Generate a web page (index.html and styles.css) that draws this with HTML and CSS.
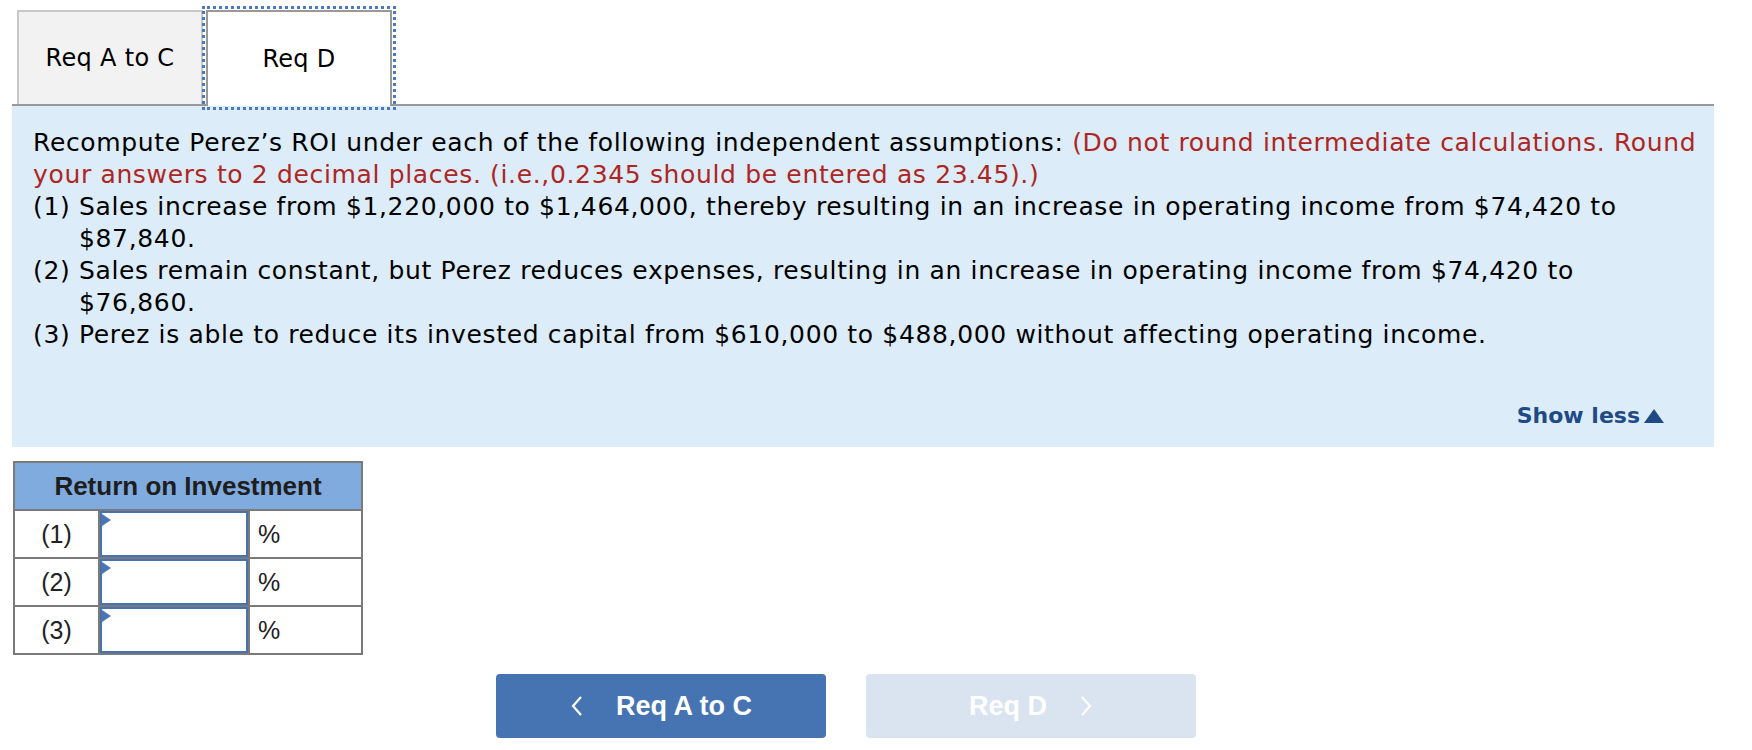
FILE: index.html
```html
<!DOCTYPE html>
<html>
<head>
<meta charset="utf-8">
<link rel="stylesheet" href="styles.css">
</head>
<body>
<div class="page">
  <div class="tabs">
    <div class="tab tab-a">Req A to C</div>
    <div class="tab tab-d">Req D</div>
  </div>
  <div class="panel">
    <p class="prompt">Recompute Perez’s ROI under each of the following independent assumptions: <span class="note">(Do not round intermediate calculations. Round<br>your answers to 2 decimal places. (i.e.,0.2345 should be entered as 23.45).)</span></p>
    <p class="item">(1) Sales increase from $1,220,000 to $1,464,000, thereby resulting in an increase in operating income from $74,420 to<br>$87,840.</p>
    <p class="item">(2) Sales remain constant, but Perez reduces expenses, resulting in an increase in operating income from $74,420 to<br>$76,860.</p>
    <p class="item">(3) Perez is able to reduce its invested capital from $610,000 to $488,000 without affecting operating income.</p>
    <div class="show-row">
      <span class="show-less">Show less<svg class="tri" width="20" height="14" viewBox="0 0 20 14"><polygon points="10,0 20,14 0,14" fill="#1f4a86"/></svg></span>
    </div>
  </div>
  <table class="roi">
    <tr><th colspan="3">Return on Investment</th></tr>
    <tr><td class="lbl">(1)</td><td class="inp"><div class="box"></div></td><td class="pct">%</td></tr>
    <tr><td class="lbl">(2)</td><td class="inp"><div class="box"></div></td><td class="pct">%</td></tr>
    <tr><td class="lbl">(3)</td><td class="inp"><div class="box"></div></td><td class="pct">%</td></tr>
  </table>
  <div class="nav">
    <div class="btn btn-prev"><svg class="chev" width="14" height="20" viewBox="0 0 14 20"><polyline points="11,1 3,10 11,19" fill="none" stroke="#fff" stroke-width="2.2"/></svg><span>Req A to C</span></div>
    <div class="btn btn-next"><span>Req D</span><svg class="chev" width="14" height="20" viewBox="0 0 14 20"><polyline points="3,1 11,10 3,19" fill="none" stroke="#fff" stroke-width="2.2"/></svg></div>
  </div>
</div>
</body>
</html>
```
FILE: styles.css
```css
html, body {
  margin: 0;
  padding: 0;
  background: #fff;
}
.page {
  padding-left: 12px;
  width: 1702px;
  font-family: "DejaVu Sans", Verdana, sans-serif;
  color: #000;
}
.tabs {
  display: flex;
  align-items: flex-end;
  margin-top: 10px;
  padding-left: 5px;
  border-bottom: 2px solid #999;
  height: 94px;
}
.tab {
  box-sizing: border-box;
  display: flex;
  align-items: center;
  justify-content: center;
  font-size: 24px;
  letter-spacing: 0.3px;
  width: 186px;
}
.tab-a {
  height: 94px;
  background: #f2f2f2;
  border: 2px solid #c8c8c8;
  border-bottom: none;
}
.tab-d {
  height: 96px;
  margin-bottom: -2px;
  margin-left: 3px;
  background: #fff;
  border: 2px solid #999;
  border-bottom: none;
  outline: 3px dotted #4a78c2;
  outline-offset: 1px;
}
.panel {
  background: #ddecf9;
  padding: 21px 10px 15px 21px;
  font-size: 25px;
  line-height: 32px;
  letter-spacing: 0.65px;
}
.prompt, .item {
  margin: 0;
}
.note {
  color: #ad2623;
}
.item {
  padding-left: 46px;
  text-indent: -46px;
}
.show-row {
  display: flex;
  justify-content: flex-end;
  margin-top: 49px;
  padding-right: 40px;
  letter-spacing: 0;
}
.show-less {
  font-size: 22px;
  font-weight: bold;
  color: #1f4a86;
  display: flex;
  align-items: baseline;
}
.tri {
  margin-left: 4px;
}
.roi {
  margin-top: 14px;
  margin-left: 1px;
  border-collapse: collapse;
  border: 2px solid #7a7a7a;
  font-family: "Liberation Sans", Arial, sans-serif;
  font-size: 25px;
  width: 350px;
}
.roi th {
  background: #80abdf;
  color: #1e1e1e;
  font-weight: bold;
  font-size: 26px;
  height: 46px;
  padding: 0;
  border: 2px solid #7a7a7a;
}
.roi td {
  border: 2px solid #7a7a7a;
  height: 46px;
  padding: 0;
  color: #222;
}
.lbl {
  width: 83px;
  text-align: center;
}
.inp {
  width: 148px;
}
.box {
  position: relative;
  box-sizing: border-box;
  height: 46px;
  width: 100%;
  border: 2px solid #4672b2;
  background: #fff;
}
.box::before {
  content: "";
  position: absolute;
  left: 0;
  top: 1px;
  border-left: 9px solid #4a76b5;
  border-top: 6px solid transparent;
  border-bottom: 6px solid transparent;
}
.pct {
  padding-left: 8px !important;
  text-align: left;
}
.nav {
  display: flex;
  gap: 40px;
  margin-top: 19px;
  padding-left: 484px;
}
.btn {
  box-sizing: border-box;
  width: 330px;
  height: 64px;
  border-radius: 4px;
  display: flex;
  align-items: center;
  justify-content: center;
  gap: 32px;
  color: #fff;
  font-family: "Liberation Sans", Arial, sans-serif;
  font-weight: bold;
  font-size: 27px;
}
.btn-prev {
  background: #4674b2;
}
.btn-next {
  background: #d9e4f0;
}
```
